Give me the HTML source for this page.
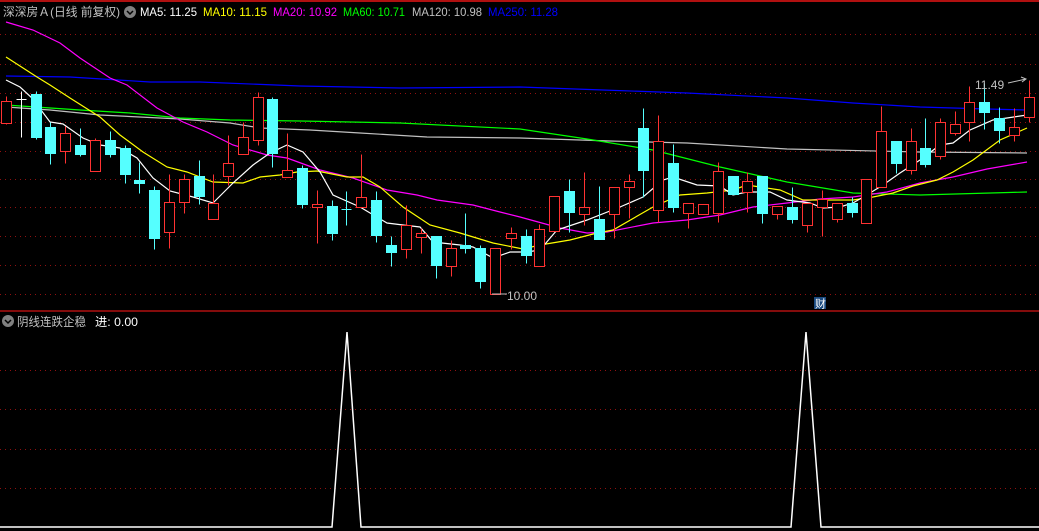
<!DOCTYPE html>
<html><head><meta charset="utf-8"><style>
html,body{margin:0;padding:0;background:#000;width:1039px;height:531px;overflow:hidden}
svg{display:block}
text{font-family:"Liberation Sans","Noto Sans CJK SC",sans-serif}
</style></head><body>
<svg width="1039" height="531" viewBox="0 0 1039 531" xmlns="http://www.w3.org/2000/svg">
<rect width="1039" height="531" fill="#000"/>
<line x1="0" y1="1" x2="1039" y2="1" stroke="#b01010" stroke-width="2"/>
<g stroke="#901010" stroke-width="1" stroke-dasharray="1,4">
<line x1="0" y1="34.5" x2="1039" y2="34.5"/><line x1="0" y1="64.5" x2="1039" y2="64.5"/>
<line x1="0" y1="93.5" x2="1039" y2="93.5"/><line x1="0" y1="122.5" x2="1039" y2="122.5"/>
<line x1="0" y1="151.5" x2="1039" y2="151.5"/><line x1="0" y1="179.5" x2="1039" y2="179.5"/>
<line x1="0" y1="207.5" x2="1039" y2="207.5"/><line x1="0" y1="236.5" x2="1039" y2="236.5"/>
<line x1="0" y1="265.5" x2="1039" y2="265.5"/><line x1="0" y1="294.5" x2="1039" y2="294.5"/>
<line x1="0" y1="370.5" x2="1039" y2="370.5"/><line x1="0" y1="409.5" x2="1039" y2="409.5"/>
<line x1="0" y1="449.5" x2="1039" y2="449.5"/><line x1="0" y1="488.5" x2="1039" y2="488.5"/>
</g>
<line x1="0" y1="311" x2="1039" y2="311" stroke="#b01010" stroke-width="1.5"/>

<g fill="none" stroke-width="1.2">
<polyline stroke="#0000ff" points="6,76 70,77 150,82 200,82 300,86 400,88 520,87 603,90 687,93 787,98 853,103 920,107 987,109 1027,110"/>
<polyline stroke="#c0c0c0" points="6,107 50,110 100,115 180,119 230,123 260,128 310,130 360,133 427,137 520,138 610,141 687,143 787,149 920,152 1027,153"/>
<polyline stroke="#00ff00" points="6,105 80,110 130,113 180,118 230,120 300,121 400,123 520,129 587,139 653,150 720,167 787,182 853,193 920,195 1027,192"/>
<polyline stroke="#ff00ff" points="6,22 33,30 60,43 80,58 110,78 127,85 157,108 183,122 207,132 233,145 267,155 287,158 320,170 353,178 387,190 417,195 437,200 473,205 500,212 520,217 560,228 587,233 607,232 653,223 687,220 720,215 753,207 787,203 820,199 853,197 887,192 920,183 953,177 987,169 1027,162"/>
<polyline stroke="#ffff00" points="6,57 37,77 50,85 70,98 100,117 120,135 143,152 167,167 187,172 213,182 243,183 260,177 280,175 297,172 317,171 347,177 363,177 380,187 403,207 430,225 460,233 493,243 523,249 540,245 570,240 597,233 613,230 653,207 680,195 707,193 733,190 747,185 760,187 780,190 803,200 820,200 853,200 873,197 893,193 913,186 937,180 953,172 973,160 1000,140 1027,128"/>
<polyline stroke="#ffffff" points="6,80 20,87 32,98 50,122 63,124 83,138 100,145 120,148 137,158 153,178 170,191 193,197 213,203 233,183 253,165 270,153 287,145 303,152 320,172 333,195 360,207 387,223 403,225 420,227 433,242 460,245 473,247 493,258 510,252 527,252 540,250 557,230 587,220 620,207 643,197 663,180 673,177 697,185 720,186 733,195 747,192 770,192 787,200 810,203 823,208 840,207 853,203 870,193 883,185 900,173 920,160 940,145 953,143 970,130 993,120 1007,118 1027,115"/>
</g>

<g transform="translate(0.5,0.5)" shape-rendering="crispEdges">
<g stroke="#ff3232" stroke-width="1" fill="#000">
<line x1="6" y1="96" x2="6" y2="124"/><rect x="1" y="101" width="10" height="22"/>
<line x1="65" y1="126" x2="65" y2="163"/><rect x="60" y="133" width="10" height="18"/>
<line x1="95" y1="138" x2="95" y2="171"/><rect x="90" y="140" width="10" height="31"/>
<line x1="169" y1="174" x2="169" y2="248"/><rect x="164" y="202" width="10" height="30"/>
<line x1="184" y1="174" x2="184" y2="213"/><rect x="179" y="179" width="10" height="23"/>
<line x1="213" y1="174" x2="213" y2="219"/><rect x="208" y="203" width="10" height="16"/>
<line x1="228" y1="135" x2="228" y2="185"/><rect x="223" y="163" width="10" height="13"/>
<line x1="243" y1="122" x2="243" y2="154"/><rect x="238" y="137" width="10" height="17"/>
<line x1="258" y1="92" x2="258" y2="145"/><rect x="253" y="97" width="10" height="43"/>
<line x1="287" y1="133" x2="287" y2="177"/><rect x="282" y="170" width="10" height="7"/>
<line x1="317" y1="190" x2="317" y2="243"/><rect x="312" y="204" width="10" height="3"/>
<line x1="361" y1="154" x2="361" y2="207"/><rect x="356" y="197" width="10" height="10"/>
<line x1="406" y1="205" x2="406" y2="258"/><rect x="401" y="225" width="10" height="24"/>
<line x1="421" y1="228" x2="421" y2="253"/><rect x="416" y="233" width="10" height="4"/>
<line x1="451" y1="240" x2="451" y2="276"/><rect x="446" y="248" width="10" height="18"/>
<line x1="495" y1="248" x2="495" y2="294"/><rect x="490" y="248" width="10" height="46"/>
<line x1="511" y1="227" x2="511" y2="249"/><rect x="506" y="233" width="10" height="5"/>
<line x1="539" y1="224" x2="539" y2="266"/><rect x="534" y="229" width="10" height="37"/>
<line x1="554" y1="196" x2="554" y2="231"/><rect x="549" y="196" width="10" height="35"/>
<line x1="584" y1="172" x2="584" y2="225"/><rect x="579" y="207" width="10" height="7"/>
<line x1="614" y1="187" x2="614" y2="238"/><rect x="609" y="187" width="10" height="27"/>
<line x1="629" y1="174" x2="629" y2="218"/><rect x="624" y="181" width="10" height="6"/>
<line x1="658" y1="115" x2="658" y2="222"/><rect x="653" y="141" width="10" height="69"/>
<line x1="688" y1="203" x2="688" y2="228"/><rect x="683" y="203" width="10" height="10"/>
<line x1="703" y1="204" x2="703" y2="214"/><rect x="698" y="204" width="10" height="10"/>
<line x1="718" y1="162" x2="718" y2="222"/><rect x="713" y="171" width="10" height="42"/>
<line x1="747" y1="172" x2="747" y2="212"/><rect x="742" y="181" width="10" height="11"/>
<line x1="777" y1="206" x2="777" y2="219"/><rect x="772" y="206" width="10" height="8"/>
<line x1="807" y1="203" x2="807" y2="232"/><rect x="802" y="203" width="10" height="22"/>
<line x1="822" y1="190" x2="822" y2="236"/><rect x="817" y="199" width="10" height="8"/>
<line x1="837" y1="203" x2="837" y2="222"/><rect x="832" y="203" width="10" height="16"/>
<line x1="866" y1="179" x2="866" y2="223"/><rect x="861" y="179" width="10" height="44"/>
<line x1="881" y1="106" x2="881" y2="187"/><rect x="876" y="131" width="10" height="56"/>
<line x1="911" y1="128" x2="911" y2="174"/><rect x="906" y="141" width="10" height="29"/>
<line x1="940" y1="118" x2="940" y2="159"/><rect x="935" y="122" width="10" height="34"/>
<line x1="955" y1="111" x2="955" y2="135"/><rect x="950" y="124" width="10" height="9"/>
<line x1="969" y1="86" x2="969" y2="141"/><rect x="964" y="102" width="10" height="20"/>
<line x1="1014" y1="108" x2="1014" y2="141"/><rect x="1009" y="127" width="10" height="8"/>
<line x1="1029" y1="80" x2="1029" y2="122"/><rect x="1024" y="97" width="10" height="20"/>
</g>
<g stroke="#55ffff" stroke-width="1" fill="#55ffff">
<line x1="36" y1="91" x2="36" y2="139"/><rect x="31" y="94" width="10" height="43"/>
<line x1="50" y1="122" x2="50" y2="164"/><rect x="45" y="127" width="10" height="26"/>
<line x1="80" y1="128" x2="80" y2="156"/><rect x="75" y="145" width="10" height="9"/>
<line x1="110" y1="131" x2="110" y2="157"/><rect x="105" y="140" width="10" height="14"/>
<line x1="125" y1="145" x2="125" y2="183"/><rect x="120" y="148" width="10" height="26"/>
<line x1="139" y1="162" x2="139" y2="193"/><rect x="134" y="180" width="10" height="3"/>
<line x1="154" y1="186" x2="154" y2="249"/><rect x="149" y="190" width="10" height="48"/>
<line x1="199" y1="160" x2="199" y2="204"/><rect x="194" y="176" width="10" height="20"/>
<line x1="272" y1="97" x2="272" y2="167"/><rect x="267" y="99" width="10" height="54"/>
<line x1="302" y1="165" x2="302" y2="208"/><rect x="297" y="168" width="10" height="36"/>
<line x1="332" y1="200" x2="332" y2="240"/><rect x="327" y="206" width="10" height="27"/>
<line x1="346" y1="191" x2="346" y2="225"/><line x1="341" y1="209" x2="351" y2="209"/>
<line x1="376" y1="191" x2="376" y2="242"/><rect x="371" y="200" width="10" height="35"/>
<line x1="391" y1="236" x2="391" y2="266"/><rect x="386" y="245" width="10" height="7"/>
<line x1="436" y1="236" x2="436" y2="278"/><rect x="431" y="236" width="10" height="29"/>
<line x1="465" y1="213" x2="465" y2="253"/><rect x="460" y="245" width="10" height="3"/>
<line x1="480" y1="245" x2="480" y2="288"/><rect x="475" y="248" width="10" height="33"/>
<line x1="526" y1="229" x2="526" y2="263"/><rect x="521" y="236" width="10" height="19"/>
<line x1="569" y1="179" x2="569" y2="232"/><rect x="564" y="191" width="10" height="21"/>
<line x1="599" y1="186" x2="599" y2="239"/><rect x="594" y="219" width="10" height="20"/>
<line x1="643" y1="108" x2="643" y2="197"/><rect x="638" y="128" width="10" height="42"/>
<line x1="673" y1="144" x2="673" y2="212"/><rect x="668" y="163" width="10" height="44"/>
<line x1="733" y1="176" x2="733" y2="194"/><rect x="728" y="176" width="10" height="18"/>
<line x1="762" y1="176" x2="762" y2="223"/><rect x="757" y="176" width="10" height="37"/>
<line x1="792" y1="187" x2="792" y2="223"/><rect x="787" y="207" width="10" height="12"/>
<line x1="852" y1="197" x2="852" y2="217"/><rect x="847" y="203" width="10" height="9"/>
<line x1="896" y1="141" x2="896" y2="173"/><rect x="891" y="141" width="10" height="22"/>
<line x1="925" y1="118" x2="925" y2="167"/><rect x="920" y="148" width="10" height="16"/>
<line x1="984" y1="83" x2="984" y2="129"/><rect x="979" y="102" width="10" height="10"/>
<line x1="999" y1="107" x2="999" y2="143"/><rect x="994" y="118" width="10" height="12"/>
</g>
<g stroke="#fff" stroke-width="1"><line x1="21" y1="91" x2="21" y2="137"/><line x1="16" y1="99" x2="26" y2="99"/></g>
</g>

<text x="507" y="300" fill="#c0c0c0" font-size="12">10.00</text>
<line x1="492" y1="294" x2="507" y2="294" stroke="#c0c0c0"/>
<text x="975" y="89" fill="#c0c0c0" font-size="12">11.49</text>
<path d="M1008 83 L1026 79 M1021 77 L1026 79 L1022 82" stroke="#c0c0c0" fill="none"/>
<rect x="814" y="297" width="12" height="12" fill="#1a4a80"/>
<text x="815" y="307.5" fill="#fff" font-size="11">财</text>

<text x="3" y="16" fill="#c0c0c0" font-size="12" textLength="117" lengthAdjust="spacingAndGlyphs">深深房Ａ(日线 前复权)</text>
<circle cx="130" cy="12" r="6" fill="#808080"/>
<path d="M127 11 L130 14 L133 11" stroke="#000" stroke-width="1.5" fill="none"/>
<text x="140" y="16" fill="#ffffff" font-size="12" textLength="57" lengthAdjust="spacingAndGlyphs">MA5: 11.25</text>
<text x="203" y="16" fill="#ffff00" font-size="12" textLength="64" lengthAdjust="spacingAndGlyphs">MA10: 11.15</text>
<text x="273" y="16" fill="#ff00ff" font-size="12" textLength="64" lengthAdjust="spacingAndGlyphs">MA20: 10.92</text>
<text x="343" y="16" fill="#00ff00" font-size="12" textLength="62" lengthAdjust="spacingAndGlyphs">MA60: 10.71</text>
<text x="412" y="16" fill="#c0c0c0" font-size="12" textLength="70" lengthAdjust="spacingAndGlyphs">MA120: 10.98</text>
<text x="488" y="16" fill="#0000ff" font-size="12" textLength="70" lengthAdjust="spacingAndGlyphs">MA250: 11.28</text>

<circle cx="8" cy="321" r="6" fill="#808080"/>
<path d="M5 320 L8 323 L11 320" stroke="#000" stroke-width="1.5" fill="none"/>
<text x="17" y="326" fill="#c0c0c0" font-size="12" textLength="69" lengthAdjust="spacingAndGlyphs">阴线连跌企稳</text>
<text x="95" y="326" fill="#ffffff" font-size="12" textLength="43" lengthAdjust="spacingAndGlyphs">进: 0.00</text>

<polyline fill="none" stroke="#fff" stroke-width="1.5" points="0,527 332,527 347,332 361,527 791,527 806,332 821,527 1039,527"/>
</svg>
</body></html>
